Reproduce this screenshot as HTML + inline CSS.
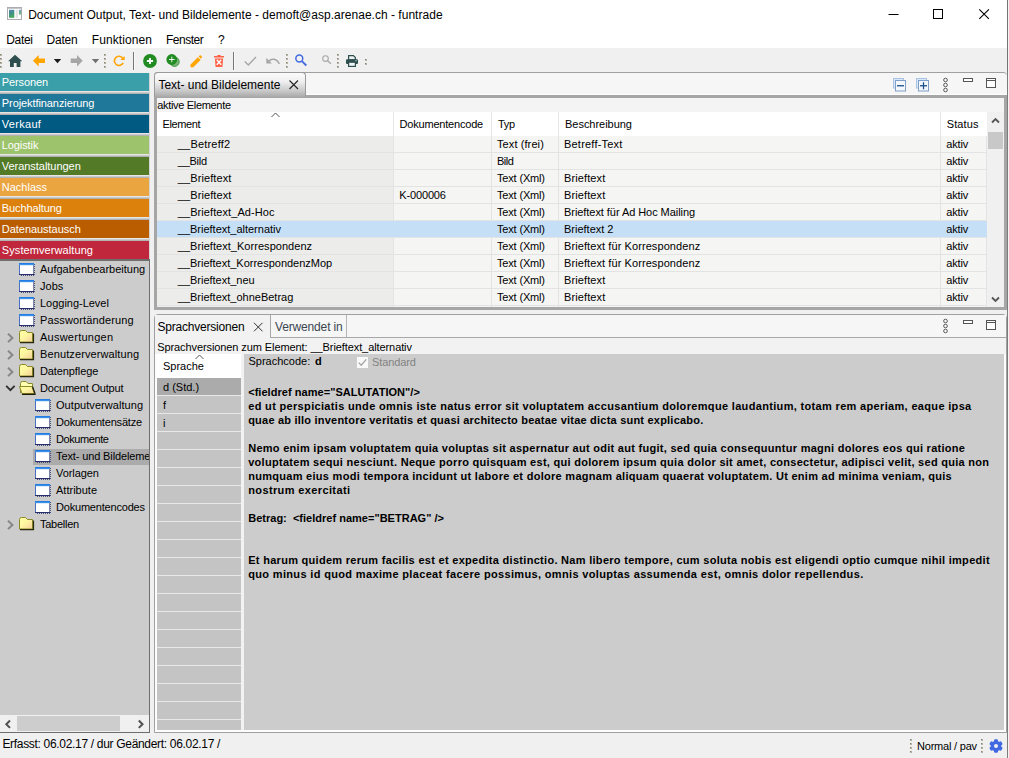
<!DOCTYPE html>
<html lang="de"><head><meta charset="utf-8"><title>Document Output, Text- und Bildelemente</title>
<style>
html,body{margin:0;padding:0;}
body{width:1009px;height:758px;overflow:hidden;background:#fff;position:relative;font-family:"Liberation Sans",sans-serif;}
#app{position:absolute;left:0;top:0;width:1009px;height:758px;overflow:hidden;background:#fff;}
#app div,#app span.t,#app svg{position:absolute;}
span.t{white-space:pre;display:block;}
</style></head><body><div id="app">

<div style="left:0px;top:48px;width:1007px;height:710px;background:#f0f0f0;"></div>
<div style="left:1007px;top:0px;width:1px;height:758px;background:#7c7c7c;"></div>
<div style="left:1007px;top:0px;width:1px;height:72px;background:#747474;"></div>
<div style="left:1008px;top:0px;width:1px;height:758px;background:#f4f4f4;"></div>
<svg style="left:7px;top:7px" width="15" height="13" viewBox="0 0 15 13"><defs><linearGradient id="ig" x1="0" y1="0" x2="0.300" y2="1"><stop offset="0" stop-color="#5a86b8"/><stop offset="0.5" stop-color="#3f8f8a"/><stop offset="1" stop-color="#48a85c"/></linearGradient></defs><rect x="0.5" y="0.5" width="14" height="12" fill="#fdfdfd" stroke="#a9acb0"/><rect x="0.5" y="1" width="14" height="1" fill="#c4c7ca"/><rect x="2" y="2.800" width="5.300" height="8" fill="url(#ig)"/><rect x="8.700" y="2.800" width="2.100" height="8" fill="#e2e2e2"/><rect x="11.900" y="2.800" width="2.200" height="4.800" fill="url(#ig)" opacity="0.750"/></svg>
<span class="t " style="left:28.2px;top:7.04px;font-size:12px;line-height:16px;color:#000;letter-spacing:0.021px;">Document Output, Text- und Bildelemente - demoft@asp.arenae.ch - funtrade</span>
<svg style="left:880px;top:0" width="127" height="30" viewBox="0 0 127 30"><path d="M8.5 14.5h10" stroke="#000" stroke-width="1" fill="none"/><rect x="53.5" y="9.5" width="9" height="9" stroke="#000" fill="none"/><path d="M99.300 9.300l9.600 9.600M108.900 9.300l-9.600 9.600" stroke="#000" stroke-width="1.100" fill="none"/></svg>
<span class="t " style="left:6.2px;top:31.84px;font-size:12px;line-height:16px;color:#000;letter-spacing:-0.304px;">Datei</span>
<span class="t " style="left:46.6px;top:31.84px;font-size:12px;line-height:16px;color:#000;letter-spacing:-0.233px;">Daten</span>
<span class="t " style="left:91.8px;top:31.84px;font-size:12px;line-height:16px;color:#000;letter-spacing:0.081px;">Funktionen</span>
<span class="t " style="left:166px;top:31.84px;font-size:12px;line-height:16px;color:#000;letter-spacing:-0.481px;">Fenster</span>
<span class="t " style="left:218px;top:31.84px;font-size:12px;line-height:16px;color:#000;letter-spacing:-1.188px;">?</span>
<div style="left:0px;top:54px;width:2px;height:2px;background:#b4b1a2;"></div>
<div style="left:0px;top:54px;width:1px;height:1px;background:#858270;"></div>
<div style="left:0px;top:58px;width:2px;height:2px;background:#b4b1a2;"></div>
<div style="left:0px;top:58px;width:1px;height:1px;background:#858270;"></div>
<div style="left:0px;top:62px;width:2px;height:2px;background:#b4b1a2;"></div>
<div style="left:0px;top:62px;width:1px;height:1px;background:#858270;"></div>
<div style="left:0px;top:66px;width:2px;height:2px;background:#b4b1a2;"></div>
<div style="left:0px;top:66px;width:1px;height:1px;background:#858270;"></div>
<div style="left:104px;top:54px;width:2px;height:2px;background:#b4b1a2;"></div>
<div style="left:104px;top:54px;width:1px;height:1px;background:#858270;"></div>
<div style="left:104px;top:58px;width:2px;height:2px;background:#b4b1a2;"></div>
<div style="left:104px;top:58px;width:1px;height:1px;background:#858270;"></div>
<div style="left:104px;top:62px;width:2px;height:2px;background:#b4b1a2;"></div>
<div style="left:104px;top:62px;width:1px;height:1px;background:#858270;"></div>
<div style="left:104px;top:66px;width:2px;height:2px;background:#b4b1a2;"></div>
<div style="left:104px;top:66px;width:1px;height:1px;background:#858270;"></div>
<div style="left:286px;top:54px;width:2px;height:2px;background:#b4b1a2;"></div>
<div style="left:286px;top:54px;width:1px;height:1px;background:#858270;"></div>
<div style="left:286px;top:58px;width:2px;height:2px;background:#b4b1a2;"></div>
<div style="left:286px;top:58px;width:1px;height:1px;background:#858270;"></div>
<div style="left:286px;top:62px;width:2px;height:2px;background:#b4b1a2;"></div>
<div style="left:286px;top:62px;width:1px;height:1px;background:#858270;"></div>
<div style="left:286px;top:66px;width:2px;height:2px;background:#b4b1a2;"></div>
<div style="left:286px;top:66px;width:1px;height:1px;background:#858270;"></div>
<div style="left:337px;top:54px;width:2px;height:2px;background:#b4b1a2;"></div>
<div style="left:337px;top:54px;width:1px;height:1px;background:#858270;"></div>
<div style="left:337px;top:58px;width:2px;height:2px;background:#b4b1a2;"></div>
<div style="left:337px;top:58px;width:1px;height:1px;background:#858270;"></div>
<div style="left:337px;top:62px;width:2px;height:2px;background:#b4b1a2;"></div>
<div style="left:337px;top:62px;width:1px;height:1px;background:#858270;"></div>
<div style="left:337px;top:66px;width:2px;height:2px;background:#b4b1a2;"></div>
<div style="left:337px;top:66px;width:1px;height:1px;background:#858270;"></div>
<div style="left:365px;top:59px;width:2px;height:2px;background:#b4b1a2;"></div>
<div style="left:365px;top:59px;width:1px;height:1px;background:#858270;"></div>
<div style="left:365px;top:63px;width:2px;height:2px;background:#b4b1a2;"></div>
<div style="left:365px;top:63px;width:1px;height:1px;background:#858270;"></div>
<div style="left:133px;top:52px;width:1px;height:18px;background:#777777;"></div>
<div style="left:233px;top:52px;width:1px;height:18px;background:#777777;"></div>
<div style="left:134px;top:52px;width:1px;height:18px;background:#f8f8f8;"></div>
<div style="left:234px;top:52px;width:1px;height:18px;background:#f8f8f8;"></div>
<svg style="left:8px;top:54px" width="14" height="14" viewBox="0 0 14 14"><path d="M7 0.7L0.100 7.300h1.900v5.700h3.800V9h2.800v4h3.800V7.300h1.900z" fill="#2f4f4f"/></svg>
<svg style="left:33px;top:55px" width="13" height="12" viewBox="0 0 13 12"><path d="M0 5.700L5.700 0.100V3.500H12V7.900H5.700V11.400z" fill="#ffa500"/></svg>
<svg style="left:53px;top:59px" width="9" height="5" viewBox="0 0 9 5"><path d="M0.800 0h7.400L4.500 4.200z" fill="#1a1a1a"/></svg>
<svg style="left:70px;top:55px" width="13" height="12" viewBox="0 0 13 12"><path d="M12.700 5.700L7 0.100V3.500H0.700V7.900H7V11.400z" fill="#a6a6a6"/></svg>
<svg style="left:91px;top:59px" width="9" height="5" viewBox="0 0 9 5"><path d="M0.800 0h7.400L4.500 4.200z" fill="#707070"/></svg>
<svg style="left:113px;top:54px" width="13" height="14" viewBox="0 0 13 14"><path d="M9.770 4.260A4.600 4.600 0 1 0 10.170 8.840" stroke="#ffa500" stroke-width="1.600" fill="none"/><path d="M11.700 1.900v4.100H7.300z" fill="#ffa500"/></svg>
<svg style="left:143px;top:54px" width="14" height="14" viewBox="0 0 14 14"><circle cx="7" cy="7" r="6.9" fill="#228b22"/><path d="M7 3.900v6.200M3.900 7h6.200" stroke="#fff" stroke-width="1.800"/></svg>
<svg style="left:166px;top:54px" width="15" height="14" viewBox="0 0 15 14"><circle cx="8.500" cy="7.700" r="4.700" fill="#7cb47c" stroke="#3f963f" stroke-width="1"/><circle cx="5.800" cy="5.500" r="5.400" fill="#228b22"/><path d="M5.800 2.700v5.600M3 5.500h5.600" stroke="#fff" stroke-width="0.900"/></svg>
<svg style="left:190px;top:54.500px" width="12.500" height="13" viewBox="0 0 13 14"><path d="M0.3 13.2v-3L8.2 2.3l3 3L3.3 13.2zM9.1 1.5l1-1c.4-.4.9-.4 1.3 0l1.1 1.2c.4.4.4.9 0 1.3l-1 1z" fill="#ffa500"/></svg>
<svg style="left:214px;top:55px" width="10" height="12" viewBox="0 0 10 12"><path d="M0 1h3l.6-1h2.8L7 1h3v1.6H0zM0.9 3.4h8.2l-.6 8c0 .4-.3.6-.7.6H2.2c-.4 0-.7-.2-.7-.6z" fill="#ff6347"/><path d="M2.800 4.700l4.400 5M7.200 4.700L2.800 9.700" stroke="#fff" stroke-width="1.400"/></svg>
<svg style="left:244px;top:56px" width="13" height="10" viewBox="0 0 13 10"><path d="M0.8 5.6l3.5 3.3L12 1" stroke="#a6a6a6" stroke-width="1.4" fill="none"/></svg>
<svg style="left:266px;top:57px" width="14" height="8" viewBox="0 0 14 8"><path d="M2.5 4.5C5.5 1.2 10.5 1.2 13.3 7" stroke="#a6a6a6" stroke-width="1.5" fill="none"/><path d="M0.3 0.8v5.6h5.6z" fill="#a6a6a6"/></svg>
<svg style="left:294.800px;top:54.300px" width="13" height="13" viewBox="0 0 13 13"><circle cx="4.300" cy="4.500" r="3.450" stroke="#4169e1" stroke-width="1.500" fill="none"/><path d="M6.900 7.100l4.400 4.400" stroke="#4169e1" stroke-width="1.800"/></svg>
<svg style="left:321.800px;top:55px" width="10" height="10" viewBox="0 0 10 10"><circle cx="3.500" cy="3.600" r="2.800" stroke="#a6a6a6" stroke-width="1.100" fill="none"/><path d="M5.600 5.700l3.300 3.100" stroke="#a6a6a6" stroke-width="1.300"/></svg>
<svg style="left:346px;top:55px" width="12" height="12" viewBox="0 0 12 12"><path d="M2.600 4.800V0.600H7.400L9.400 2.600V4.800z" fill="#eef2f2" stroke="#2f4f4f" stroke-width="1.200"/><rect x="0" y="4.200" width="12" height="4.800" rx="1.100" fill="#2f4f4f"/><rect x="2.600" y="7.200" width="6.800" height="4.200" fill="#f2f5f5" stroke="#2f4f4f" stroke-width="1.200"/><rect x="9.300" y="5.300" width="1.400" height="0.900" fill="#d5dede"/></svg>
<div style="left:0px;top:73px;width:150px;height:187px;background:#d4d4d4;"></div>
<div style="left:0px;top:73px;width:149px;height:18px;background:#3a9fa8;"></div>
<div style="left:0px;top:91px;width:149px;height:1px;background:#e6e6e6;"></div>
<div style="left:0px;top:92px;width:149px;height:1px;background:#cbcbcb;"></div>
<div style="left:0px;top:93px;width:149px;height:1px;background:#b2b2b2;"></div>
<span class="t " style="left:1.8px;top:74.69px;font-size:11px;line-height:15px;color:#fff;letter-spacing:-0.113px;">Personen</span>
<div style="left:0px;top:94px;width:149px;height:18px;background:#1f789a;"></div>
<div style="left:0px;top:112px;width:149px;height:1px;background:#e6e6e6;"></div>
<div style="left:0px;top:113px;width:149px;height:1px;background:#cbcbcb;"></div>
<div style="left:0px;top:114px;width:149px;height:1px;background:#b2b2b2;"></div>
<span class="t " style="left:1.8px;top:95.69px;font-size:11px;line-height:15px;color:#fff;letter-spacing:-0.082px;">Projektfinanzierung</span>
<div style="left:0px;top:115px;width:149px;height:18px;background:#005a82;"></div>
<div style="left:0px;top:133px;width:149px;height:1px;background:#e6e6e6;"></div>
<div style="left:0px;top:134px;width:149px;height:1px;background:#cbcbcb;"></div>
<div style="left:0px;top:135px;width:149px;height:1px;background:#b2b2b2;"></div>
<span class="t " style="left:1.8px;top:116.69px;font-size:11px;line-height:15px;color:#fff;letter-spacing:0.298px;">Verkauf</span>
<div style="left:0px;top:136px;width:149px;height:18px;background:#9dc46c;"></div>
<div style="left:0px;top:154px;width:149px;height:1px;background:#e6e6e6;"></div>
<div style="left:0px;top:155px;width:149px;height:1px;background:#cbcbcb;"></div>
<div style="left:0px;top:156px;width:149px;height:1px;background:#b2b2b2;"></div>
<span class="t " style="left:1.8px;top:137.69px;font-size:11px;line-height:15px;color:#fff;letter-spacing:-0.1px;">Logistik</span>
<div style="left:0px;top:157px;width:149px;height:18px;background:#537a27;"></div>
<div style="left:0px;top:175px;width:149px;height:1px;background:#e6e6e6;"></div>
<div style="left:0px;top:176px;width:149px;height:1px;background:#cbcbcb;"></div>
<div style="left:0px;top:177px;width:149px;height:1px;background:#b2b2b2;"></div>
<span class="t " style="left:1.8px;top:158.69px;font-size:11px;line-height:15px;color:#fff;letter-spacing:-0.037px;">Veranstaltungen</span>
<div style="left:0px;top:178px;width:149px;height:18px;background:#eba540;"></div>
<div style="left:0px;top:196px;width:149px;height:1px;background:#e6e6e6;"></div>
<div style="left:0px;top:197px;width:149px;height:1px;background:#cbcbcb;"></div>
<div style="left:0px;top:198px;width:149px;height:1px;background:#b2b2b2;"></div>
<span class="t " style="left:1.8px;top:179.69px;font-size:11px;line-height:15px;color:#fff;letter-spacing:-0.007px;">Nachlass</span>
<div style="left:0px;top:199px;width:149px;height:18px;background:#dc820c;"></div>
<div style="left:0px;top:217px;width:149px;height:1px;background:#e6e6e6;"></div>
<div style="left:0px;top:218px;width:149px;height:1px;background:#cbcbcb;"></div>
<div style="left:0px;top:219px;width:149px;height:1px;background:#b2b2b2;"></div>
<span class="t " style="left:1.8px;top:200.69px;font-size:11px;line-height:15px;color:#fff;letter-spacing:-0.107px;">Buchhaltung</span>
<div style="left:0px;top:220px;width:149px;height:18px;background:#b95d00;"></div>
<div style="left:0px;top:238px;width:149px;height:1px;background:#e6e6e6;"></div>
<div style="left:0px;top:239px;width:149px;height:1px;background:#cbcbcb;"></div>
<div style="left:0px;top:240px;width:149px;height:1px;background:#b2b2b2;"></div>
<span class="t " style="left:1.8px;top:221.69px;font-size:11px;line-height:15px;color:#fff;letter-spacing:-0.038px;">Datenaustausch</span>
<div style="left:0px;top:241px;width:149px;height:18px;background:#c0263c;"></div>
<span class="t " style="left:1.8px;top:242.69px;font-size:11px;line-height:15px;color:#fff;letter-spacing:0.088px;">Systemverwaltung</span>
<div style="left:0px;top:259px;width:150px;height:474px;background:#6e6e6e;"></div>
<div style="left:0px;top:261px;width:149px;height:471px;background:#cccccc;"></div>
<div style="left:0px;top:715px;width:149px;height:17px;background:#f0f0f0;"></div>
<div style="left:17px;top:716px;width:103px;height:15px;background:#cdcdcd;"></div>
<svg style="left:0;top:715.500px" width="149" height="16" viewBox="0 0 149 16"><path d="M10 4.500L6.300 8.200l3.700 3.700M138.800 4.500l3.700 3.700-3.700 3.700" stroke="#505050" stroke-width="2" fill="none"/></svg>
<svg style="left:0;top:0" width="0" height="0"><defs><linearGradient id="fg" x1="0" y1="0" x2="1" y2="1"><stop offset="0" stop-color="#ffffa6"/><stop offset="0.45" stop-color="#fdf7a0"/><stop offset="1" stop-color="#f6cf9e"/></linearGradient><linearGradient id="wg" x1="0" y1="0" x2="0" y2="1"><stop offset="0" stop-color="#1874dc"/><stop offset="1" stop-color="#4a9cf0"/></linearGradient></defs></svg>
<svg style="left:19px;top:263px" width="16" height="13" viewBox="0 0 16 13"><rect x="0.5" y="0.5" width="14" height="11" fill="#fff" stroke="#4a6ec0"/><path d="M0 11.500H15" stroke="#262e6e"/><rect x="0" y="0" width="15" height="2.200" fill="url(#wg)"/><path d="M15.500 1v11.500H1" stroke="#4a5078" fill="none" stroke-dasharray="1 1"/><path d="M14.500 2v9" stroke="#7a86a8" fill="none"/></svg>
<span class="t " style="left:40px;top:261.69px;font-size:11px;line-height:15px;color:#000;letter-spacing:-0.001px;">Aufgabenbearbeitung</span>
<svg style="left:19px;top:280px" width="16" height="13" viewBox="0 0 16 13"><rect x="0.5" y="0.5" width="14" height="11" fill="#fff" stroke="#4a6ec0"/><path d="M0 11.500H15" stroke="#262e6e"/><rect x="0" y="0" width="15" height="2.200" fill="url(#wg)"/><path d="M15.500 1v11.500H1" stroke="#4a5078" fill="none" stroke-dasharray="1 1"/><path d="M14.500 2v9" stroke="#7a86a8" fill="none"/></svg>
<span class="t " style="left:40px;top:278.69px;font-size:11px;line-height:15px;color:#000;letter-spacing:0.017px;">Jobs</span>
<svg style="left:19px;top:297px" width="16" height="13" viewBox="0 0 16 13"><rect x="0.5" y="0.5" width="14" height="11" fill="#fff" stroke="#4a6ec0"/><path d="M0 11.500H15" stroke="#262e6e"/><rect x="0" y="0" width="15" height="2.200" fill="url(#wg)"/><path d="M15.500 1v11.500H1" stroke="#4a5078" fill="none" stroke-dasharray="1 1"/><path d="M14.500 2v9" stroke="#7a86a8" fill="none"/></svg>
<span class="t " style="left:40px;top:295.69px;font-size:11px;line-height:15px;color:#000;letter-spacing:-0.019px;">Logging-Level</span>
<svg style="left:19px;top:314px" width="16" height="13" viewBox="0 0 16 13"><rect x="0.5" y="0.5" width="14" height="11" fill="#fff" stroke="#4a6ec0"/><path d="M0 11.500H15" stroke="#262e6e"/><rect x="0" y="0" width="15" height="2.200" fill="url(#wg)"/><path d="M15.500 1v11.500H1" stroke="#4a5078" fill="none" stroke-dasharray="1 1"/><path d="M14.500 2v9" stroke="#7a86a8" fill="none"/></svg>
<span class="t " style="left:40px;top:312.69px;font-size:11px;line-height:15px;color:#000;letter-spacing:0.124px;">Passwortänderung</span>
<svg style="left:7.1px;top:332.5px" width="7" height="10" viewBox="0 0 7 10"><path d="M1 0.700L5.400 4.900L1 9.100" stroke="#868686" stroke-width="2" fill="none"/></svg>
<svg style="left:19px;top:330px" width="16" height="14" viewBox="0 0 16 14"><path d="M0.500 12V2.500Q0.500 0.500 2.500 0.500H6.500L8.500 2.500H13.500V12z" fill="url(#fg)" stroke="#8a8a28"/><path d="M14.500 3.500V12.700H1" stroke="#2a2a10" fill="none" stroke-width="1.200"/></svg>
<span class="t " style="left:40px;top:329.69px;font-size:11px;line-height:15px;color:#000;letter-spacing:0.243px;">Auswertungen</span>
<svg style="left:7.1px;top:349.5px" width="7" height="10" viewBox="0 0 7 10"><path d="M1 0.700L5.400 4.900L1 9.100" stroke="#868686" stroke-width="2" fill="none"/></svg>
<svg style="left:19px;top:347px" width="16" height="14" viewBox="0 0 16 14"><path d="M0.500 12V2.500Q0.500 0.500 2.500 0.500H6.500L8.500 2.500H13.500V12z" fill="url(#fg)" stroke="#8a8a28"/><path d="M14.500 3.500V12.700H1" stroke="#2a2a10" fill="none" stroke-width="1.200"/></svg>
<span class="t " style="left:40px;top:346.69px;font-size:11px;line-height:15px;color:#000;letter-spacing:0.11px;">Benutzerverwaltung</span>
<svg style="left:7.1px;top:366.5px" width="7" height="10" viewBox="0 0 7 10"><path d="M1 0.700L5.400 4.900L1 9.100" stroke="#868686" stroke-width="2" fill="none"/></svg>
<svg style="left:19px;top:364px" width="16" height="14" viewBox="0 0 16 14"><path d="M0.500 12V2.500Q0.500 0.500 2.500 0.500H6.500L8.500 2.500H13.500V12z" fill="url(#fg)" stroke="#8a8a28"/><path d="M14.500 3.500V12.700H1" stroke="#2a2a10" fill="none" stroke-width="1.200"/></svg>
<span class="t " style="left:40px;top:363.69px;font-size:11px;line-height:15px;color:#000;letter-spacing:-0.103px;">Datenpflege</span>
<svg style="left:5px;top:385px" width="11" height="7" viewBox="0 0 11 7"><path d="M1.200 0.800l4.200 4.300L9.600 0.800" stroke="#303030" stroke-width="1.900" fill="none"/></svg>
<svg style="left:19px;top:381px" width="17" height="14" viewBox="0 0 17 14"><path d="M1.500 12V2.500Q1.500 0.500 3.500 0.500H7L9 2.500H13.500V5.500" fill="#ffffb4" stroke="#8a8a28"/><path d="M0.500 5.500H12.800L15.300 12.500H3z" fill="url(#fg)" stroke="#8a8a28"/><path d="M13.500 5.500L16 12.500V13.300H3" stroke="#1a1a08" fill="none" stroke-width="1.200"/></svg>
<span class="t " style="left:40px;top:380.69px;font-size:11px;line-height:15px;color:#000;letter-spacing:-0.194px;">Document Output</span>
<svg style="left:35px;top:399px" width="16" height="13" viewBox="0 0 16 13"><rect x="0.5" y="0.5" width="14" height="11" fill="#fff" stroke="#4a6ec0"/><path d="M0 11.500H15" stroke="#262e6e"/><rect x="0" y="0" width="15" height="2.200" fill="url(#wg)"/><path d="M15.500 1v11.500H1" stroke="#4a5078" fill="none" stroke-dasharray="1 1"/><path d="M14.500 2v9" stroke="#7a86a8" fill="none"/></svg>
<span class="t " style="left:56px;top:397.69px;font-size:11px;line-height:15px;color:#000;letter-spacing:0.052px;">Outputverwaltung</span>
<svg style="left:35px;top:416px" width="16" height="13" viewBox="0 0 16 13"><rect x="0.5" y="0.5" width="14" height="11" fill="#fff" stroke="#4a6ec0"/><path d="M0 11.500H15" stroke="#262e6e"/><rect x="0" y="0" width="15" height="2.200" fill="url(#wg)"/><path d="M15.500 1v11.500H1" stroke="#4a5078" fill="none" stroke-dasharray="1 1"/><path d="M14.500 2v9" stroke="#7a86a8" fill="none"/></svg>
<span class="t " style="left:56px;top:414.69px;font-size:11px;line-height:15px;color:#000;letter-spacing:-0.177px;">Dokumentensätze</span>
<svg style="left:35px;top:433px" width="16" height="13" viewBox="0 0 16 13"><rect x="0.5" y="0.5" width="14" height="11" fill="#fff" stroke="#4a6ec0"/><path d="M0 11.500H15" stroke="#262e6e"/><rect x="0" y="0" width="15" height="2.200" fill="url(#wg)"/><path d="M15.500 1v11.500H1" stroke="#4a5078" fill="none" stroke-dasharray="1 1"/><path d="M14.500 2v9" stroke="#7a86a8" fill="none"/></svg>
<span class="t " style="left:56px;top:431.69px;font-size:11px;line-height:15px;color:#000;letter-spacing:-0.408px;">Dokumente</span>
<div style="left:33px;top:449px;width:116px;height:16px;background:#ababab;"></div>
<svg style="left:35px;top:450px" width="16" height="13" viewBox="0 0 16 13"><rect x="0.5" y="0.5" width="14" height="11" fill="#fff" stroke="#4a6ec0"/><path d="M0 11.500H15" stroke="#262e6e"/><rect x="0" y="0" width="15" height="2.200" fill="url(#wg)"/><path d="M15.500 1v11.500H1" stroke="#4a5078" fill="none" stroke-dasharray="1 1"/><path d="M14.500 2v9" stroke="#7a86a8" fill="none"/></svg>
<div style="left:56px;top:448px;width:93px;height:17px;overflow:hidden;background:none"><span class="t" style="left:0;top:1.4px;font-size:11px;line-height:15px;color:#000;letter-spacing:-0.12px">Text- und Bildelemente</span></div>
<svg style="left:35px;top:467px" width="16" height="13" viewBox="0 0 16 13"><rect x="0.5" y="0.5" width="14" height="11" fill="#fff" stroke="#4a6ec0"/><path d="M0 11.500H15" stroke="#262e6e"/><rect x="0" y="0" width="15" height="2.200" fill="url(#wg)"/><path d="M15.500 1v11.500H1" stroke="#4a5078" fill="none" stroke-dasharray="1 1"/><path d="M14.500 2v9" stroke="#7a86a8" fill="none"/></svg>
<span class="t " style="left:56px;top:465.69px;font-size:11px;line-height:15px;color:#000;letter-spacing:-0.077px;">Vorlagen</span>
<svg style="left:35px;top:484px" width="16" height="13" viewBox="0 0 16 13"><rect x="0.5" y="0.5" width="14" height="11" fill="#fff" stroke="#4a6ec0"/><path d="M0 11.500H15" stroke="#262e6e"/><rect x="0" y="0" width="15" height="2.200" fill="url(#wg)"/><path d="M15.500 1v11.500H1" stroke="#4a5078" fill="none" stroke-dasharray="1 1"/><path d="M14.500 2v9" stroke="#7a86a8" fill="none"/></svg>
<span class="t " style="left:56px;top:482.69px;font-size:11px;line-height:15px;color:#000;letter-spacing:0.004px;">Attribute</span>
<svg style="left:35px;top:501px" width="16" height="13" viewBox="0 0 16 13"><rect x="0.5" y="0.5" width="14" height="11" fill="#fff" stroke="#4a6ec0"/><path d="M0 11.500H15" stroke="#262e6e"/><rect x="0" y="0" width="15" height="2.200" fill="url(#wg)"/><path d="M15.500 1v11.500H1" stroke="#4a5078" fill="none" stroke-dasharray="1 1"/><path d="M14.500 2v9" stroke="#7a86a8" fill="none"/></svg>
<span class="t " style="left:56px;top:499.69px;font-size:11px;line-height:15px;color:#000;letter-spacing:-0.195px;">Dokumentencodes</span>
<svg style="left:7.1px;top:519.5px" width="7" height="10" viewBox="0 0 7 10"><path d="M1 0.700L5.400 4.900L1 9.100" stroke="#868686" stroke-width="2" fill="none"/></svg>
<svg style="left:19px;top:517px" width="16" height="14" viewBox="0 0 16 14"><path d="M0.500 12V2.500Q0.500 0.500 2.500 0.500H6.500L8.500 2.500H13.500V12z" fill="url(#fg)" stroke="#8a8a28"/><path d="M14.500 3.500V12.700H1" stroke="#2a2a10" fill="none" stroke-width="1.200"/></svg>
<span class="t " style="left:40px;top:516.69px;font-size:11px;line-height:15px;color:#000;letter-spacing:-0.269px;">Tabellen</span>
<div style="left:154px;top:72px;width:853px;height:25px;background:#f6f6f6;border-top:1px solid #a0a0a0;border-radius:4px 4px 0 0;box-sizing:border-box"></div>
<div style="left:306px;top:94px;width:701px;height:1px;background:#fdfdfd;"></div>
<div style="left:154px;top:95px;width:853px;height:215px;background:#a6a6a6;"></div>
<div style="left:154px;top:72px;width:152px;height:25px;box-sizing:border-box;border:1px solid #9a9a9a;border-bottom:none;border-radius:4px 4px 0 0;background:linear-gradient(#fbfbfb 0%,#f0f0f0 35%,#c8c8c8 75%,#a8a8a8 100%)"></div>
<span class="t " style="left:158.4px;top:76.84px;font-size:12px;line-height:16px;color:#000;letter-spacing:0.001px;">Text- und Bildelemente</span>
<svg style="left:289px;top:80px" width="10" height="10" viewBox="0 0 10 10"><path d="M0.5 0.5l8.500 8.500M9 0.5L0.5 9" stroke="#222" stroke-width="1.1" fill="none"/></svg>
<svg style="left:893px;top:78px" width="13" height="14" viewBox="0 0 13 14"><rect x="0.5" y="0.5" width="10" height="9.500" fill="#dbe8f8" stroke="#a9c3e4"/><rect x="2.500" y="2.500" width="10" height="10.500" fill="#f4f8fd" stroke="#7f9fc8"/><path d="M4 7.750h7" stroke="#1b4f8a" stroke-width="1.300"/></svg>
<svg style="left:916px;top:78px" width="13" height="14" viewBox="0 0 13 14"><rect x="0.5" y="0.5" width="10" height="9.500" fill="#dbe8f8" stroke="#a9c3e4"/><rect x="2.500" y="2.500" width="10" height="10.500" fill="#f4f8fd" stroke="#7f9fc8"/><path d="M4 7.750h7" stroke="#1b4f8a" stroke-width="1.300"/><path d="M7.500 4.250v7" stroke="#1b4f8a" stroke-width="1.300"/></svg>
<svg style="left:942px;top:77px" width="7" height="16" viewBox="0 0 7 16"><circle cx="3.500" cy="3" r="1.800" fill="#fff" stroke="#555"/><circle cx="3.500" cy="8" r="1.800" fill="#fff" stroke="#555"/><circle cx="3.500" cy="13" r="1.800" fill="#fff" stroke="#555"/></svg>
<svg style="left:963px;top:78px" width="11" height="5" viewBox="0 0 11 5"><rect x="0.5" y="0.5" width="9" height="3" fill="#fff" stroke="#555"/></svg>
<svg style="left:986px;top:78px" width="11" height="11" viewBox="0 0 11 11"><rect x="0.5" y="0.5" width="9" height="9" fill="#fff" stroke="#555"/><path d="M0.5 2.500h9" stroke="#555"/></svg>
<div style="left:157px;top:98px;width:847px;height:14px;background:#f4f4f4;"></div>
<span class="t " style="left:157.3px;top:97.69px;font-size:11px;line-height:15px;color:#000;letter-spacing:-0.326px;">aktive Elemente</span>
<div style="left:157px;top:112px;width:829.5px;height:24px;background:#ffffff;"></div>
<div style="left:987px;top:112px;width:17px;height:195px;background:#f0f0f0;"></div>
<div style="left:157px;top:136px;width:830px;height:171px;background:#e3e3e3;"></div>
<div style="left:157px;top:136px;width:236px;height:16px;background:#ececea;"></div>
<div style="left:394px;top:136px;width:97px;height:16px;background:#f5f5f3;"></div>
<div style="left:492px;top:136px;width:66px;height:16px;background:#f5f5f3;"></div>
<div style="left:559px;top:136px;width:381px;height:16px;background:#f5f5f3;"></div>
<div style="left:941px;top:136px;width:45px;height:16px;background:#f5f5f3;"></div>
<span class="t " style="left:177.8px;top:136.69px;font-size:11px;line-height:15px;color:#000;letter-spacing:0.193px;">__Betreff2</span>
<span class="t " style="left:497px;top:136.69px;font-size:11px;line-height:15px;color:#000;letter-spacing:0.096px;">Text (frei)</span>
<span class="t " style="left:564px;top:136.69px;font-size:11px;line-height:15px;color:#000;letter-spacing:0.205px;">Betreff-Text</span>
<span class="t " style="left:946.2px;top:136.69px;font-size:11px;line-height:15px;color:#000;letter-spacing:-0.131px;">aktiv</span>
<div style="left:157px;top:153px;width:236px;height:16px;background:#ececea;"></div>
<div style="left:394px;top:153px;width:97px;height:16px;background:#f5f5f3;"></div>
<div style="left:492px;top:153px;width:66px;height:16px;background:#f5f5f3;"></div>
<div style="left:559px;top:153px;width:381px;height:16px;background:#f5f5f3;"></div>
<div style="left:941px;top:153px;width:45px;height:16px;background:#f5f5f3;"></div>
<span class="t " style="left:177.8px;top:153.69px;font-size:11px;line-height:15px;color:#000;letter-spacing:-0.276px;">__Bild</span>
<span class="t " style="left:497px;top:153.69px;font-size:11px;line-height:15px;color:#000;letter-spacing:-0.481px;">Bild</span>
<span class="t " style="left:946.2px;top:153.69px;font-size:11px;line-height:15px;color:#000;letter-spacing:-0.131px;">aktiv</span>
<div style="left:157px;top:170px;width:236px;height:16px;background:#ececea;"></div>
<div style="left:394px;top:170px;width:97px;height:16px;background:#f5f5f3;"></div>
<div style="left:492px;top:170px;width:66px;height:16px;background:#f5f5f3;"></div>
<div style="left:559px;top:170px;width:381px;height:16px;background:#f5f5f3;"></div>
<div style="left:941px;top:170px;width:45px;height:16px;background:#f5f5f3;"></div>
<span class="t " style="left:177.8px;top:170.69px;font-size:11px;line-height:15px;color:#000;letter-spacing:0.101px;">__Brieftext</span>
<span class="t " style="left:497px;top:170.69px;font-size:11px;line-height:15px;color:#000;letter-spacing:-0.167px;">Text (Xml)</span>
<span class="t " style="left:564px;top:170.69px;font-size:11px;line-height:15px;color:#000;letter-spacing:0.105px;">Brieftext</span>
<span class="t " style="left:946.2px;top:170.69px;font-size:11px;line-height:15px;color:#000;letter-spacing:-0.131px;">aktiv</span>
<div style="left:157px;top:187px;width:236px;height:16px;background:#ececea;"></div>
<div style="left:394px;top:187px;width:97px;height:16px;background:#f5f5f3;"></div>
<div style="left:492px;top:187px;width:66px;height:16px;background:#f5f5f3;"></div>
<div style="left:559px;top:187px;width:381px;height:16px;background:#f5f5f3;"></div>
<div style="left:941px;top:187px;width:45px;height:16px;background:#f5f5f3;"></div>
<span class="t " style="left:177.8px;top:187.69px;font-size:11px;line-height:15px;color:#000;letter-spacing:0.101px;">__Brieftext</span>
<span class="t " style="left:399.2px;top:187.69px;font-size:11px;line-height:15px;color:#000;letter-spacing:-0.131px;">K-000006</span>
<span class="t " style="left:497px;top:187.69px;font-size:11px;line-height:15px;color:#000;letter-spacing:-0.167px;">Text (Xml)</span>
<span class="t " style="left:564px;top:187.69px;font-size:11px;line-height:15px;color:#000;letter-spacing:0.105px;">Brieftext</span>
<span class="t " style="left:946.2px;top:187.69px;font-size:11px;line-height:15px;color:#000;letter-spacing:-0.131px;">aktiv</span>
<div style="left:157px;top:204px;width:236px;height:16px;background:#ececea;"></div>
<div style="left:394px;top:204px;width:97px;height:16px;background:#f5f5f3;"></div>
<div style="left:492px;top:204px;width:66px;height:16px;background:#f5f5f3;"></div>
<div style="left:559px;top:204px;width:381px;height:16px;background:#f5f5f3;"></div>
<div style="left:941px;top:204px;width:45px;height:16px;background:#f5f5f3;"></div>
<span class="t " style="left:177.8px;top:204.69px;font-size:11px;line-height:15px;color:#000;letter-spacing:0.077px;">__Brieftext_Ad-Hoc</span>
<span class="t " style="left:497px;top:204.69px;font-size:11px;line-height:15px;color:#000;letter-spacing:-0.167px;">Text (Xml)</span>
<span class="t " style="left:564px;top:204.69px;font-size:11px;line-height:15px;color:#000;letter-spacing:-0.058px;">Brieftext für Ad Hoc Mailing</span>
<span class="t " style="left:946.2px;top:204.69px;font-size:11px;line-height:15px;color:#000;letter-spacing:-0.131px;">aktiv</span>
<div style="left:157px;top:221px;width:237px;height:16px;background:#c5dff6;"></div>
<div style="left:394px;top:221px;width:98px;height:16px;background:#c5dff6;"></div>
<div style="left:492px;top:221px;width:67px;height:16px;background:#c5dff6;"></div>
<div style="left:559px;top:221px;width:382px;height:16px;background:#c5dff6;"></div>
<div style="left:941px;top:221px;width:46px;height:16px;background:#c5dff6;"></div>
<span class="t " style="left:177.8px;top:221.69px;font-size:11px;line-height:15px;color:#000;letter-spacing:-0.007px;">__Brieftext_alternativ</span>
<span class="t " style="left:497px;top:221.69px;font-size:11px;line-height:15px;color:#000;letter-spacing:-0.167px;">Text (Xml)</span>
<span class="t " style="left:564px;top:221.69px;font-size:11px;line-height:15px;color:#000;letter-spacing:-0.003px;">Brieftext 2</span>
<span class="t " style="left:946.2px;top:221.69px;font-size:11px;line-height:15px;color:#000;letter-spacing:-0.131px;">aktiv</span>
<div style="left:157px;top:238px;width:236px;height:16px;background:#ececea;"></div>
<div style="left:394px;top:238px;width:97px;height:16px;background:#f5f5f3;"></div>
<div style="left:492px;top:238px;width:66px;height:16px;background:#f5f5f3;"></div>
<div style="left:559px;top:238px;width:381px;height:16px;background:#f5f5f3;"></div>
<div style="left:941px;top:238px;width:45px;height:16px;background:#f5f5f3;"></div>
<span class="t " style="left:177.8px;top:238.69px;font-size:11px;line-height:15px;color:#000;letter-spacing:0.041px;">__Brieftext_Korrespondenz</span>
<span class="t " style="left:497px;top:238.69px;font-size:11px;line-height:15px;color:#000;letter-spacing:-0.167px;">Text (Xml)</span>
<span class="t " style="left:564px;top:238.69px;font-size:11px;line-height:15px;color:#000;letter-spacing:0.088px;">Brieftext für Korrespondenz</span>
<span class="t " style="left:946.2px;top:238.69px;font-size:11px;line-height:15px;color:#000;letter-spacing:-0.131px;">aktiv</span>
<div style="left:157px;top:255px;width:236px;height:16px;background:#ececea;"></div>
<div style="left:394px;top:255px;width:97px;height:16px;background:#f5f5f3;"></div>
<div style="left:492px;top:255px;width:66px;height:16px;background:#f5f5f3;"></div>
<div style="left:559px;top:255px;width:381px;height:16px;background:#f5f5f3;"></div>
<div style="left:941px;top:255px;width:45px;height:16px;background:#f5f5f3;"></div>
<span class="t " style="left:177.8px;top:255.69px;font-size:11px;line-height:15px;color:#000;letter-spacing:-0.012px;">__Brieftext_KorrespondenzMop</span>
<span class="t " style="left:497px;top:255.69px;font-size:11px;line-height:15px;color:#000;letter-spacing:-0.167px;">Text (Xml)</span>
<span class="t " style="left:564px;top:255.69px;font-size:11px;line-height:15px;color:#000;letter-spacing:0.088px;">Brieftext für Korrespondenz</span>
<span class="t " style="left:946.2px;top:255.69px;font-size:11px;line-height:15px;color:#000;letter-spacing:-0.131px;">aktiv</span>
<div style="left:157px;top:272px;width:236px;height:16px;background:#ececea;"></div>
<div style="left:394px;top:272px;width:97px;height:16px;background:#f5f5f3;"></div>
<div style="left:492px;top:272px;width:66px;height:16px;background:#f5f5f3;"></div>
<div style="left:559px;top:272px;width:381px;height:16px;background:#f5f5f3;"></div>
<div style="left:941px;top:272px;width:45px;height:16px;background:#f5f5f3;"></div>
<span class="t " style="left:177.8px;top:272.69px;font-size:11px;line-height:15px;color:#000;letter-spacing:-0.012px;">__Brieftext_neu</span>
<span class="t " style="left:497px;top:272.69px;font-size:11px;line-height:15px;color:#000;letter-spacing:-0.167px;">Text (Xml)</span>
<span class="t " style="left:564px;top:272.69px;font-size:11px;line-height:15px;color:#000;letter-spacing:0.105px;">Brieftext</span>
<span class="t " style="left:946.2px;top:272.69px;font-size:11px;line-height:15px;color:#000;letter-spacing:-0.131px;">aktiv</span>
<div style="left:157px;top:289px;width:236px;height:16px;background:#ececea;"></div>
<div style="left:394px;top:289px;width:97px;height:16px;background:#f5f5f3;"></div>
<div style="left:492px;top:289px;width:66px;height:16px;background:#f5f5f3;"></div>
<div style="left:559px;top:289px;width:381px;height:16px;background:#f5f5f3;"></div>
<div style="left:941px;top:289px;width:45px;height:16px;background:#f5f5f3;"></div>
<span class="t " style="left:177.8px;top:289.69px;font-size:11px;line-height:15px;color:#000;letter-spacing:-0.004px;">__Brieftext_ohneBetrag</span>
<span class="t " style="left:497px;top:289.69px;font-size:11px;line-height:15px;color:#000;letter-spacing:-0.167px;">Text (Xml)</span>
<span class="t " style="left:564px;top:289.69px;font-size:11px;line-height:15px;color:#000;letter-spacing:0.105px;">Brieftext</span>
<span class="t " style="left:946.2px;top:289.69px;font-size:11px;line-height:15px;color:#000;letter-spacing:-0.131px;">aktiv</span>
<div style="left:157px;top:306px;width:236px;height:1px;background:#ececea;"></div>
<div style="left:394px;top:306px;width:97px;height:1px;background:#f5f5f3;"></div>
<div style="left:492px;top:306px;width:66px;height:1px;background:#f5f5f3;"></div>
<div style="left:559px;top:306px;width:381px;height:1px;background:#f5f5f3;"></div>
<div style="left:941px;top:306px;width:45px;height:1px;background:#f5f5f3;"></div>
<div style="left:393px;top:112px;width:1px;height:24px;background:#e6e6e6;"></div>
<div style="left:491px;top:112px;width:1px;height:24px;background:#e6e6e6;"></div>
<div style="left:558px;top:112px;width:1px;height:24px;background:#e6e6e6;"></div>
<div style="left:940px;top:112px;width:1px;height:24px;background:#e6e6e6;"></div>
<span class="t " style="left:162.6px;top:116.69px;font-size:11px;line-height:15px;color:#000;letter-spacing:-0.41px;">Element</span>
<span class="t " style="left:399.6px;top:116.69px;font-size:11px;line-height:15px;color:#000;letter-spacing:-0.203px;">Dokumentencode</span>
<span class="t " style="left:498px;top:116.69px;font-size:11px;line-height:15px;color:#000;letter-spacing:-0.367px;">Typ</span>
<span class="t " style="left:565px;top:116.69px;font-size:11px;line-height:15px;color:#000;letter-spacing:-0.026px;">Beschreibung</span>
<span class="t " style="left:946.8px;top:116.69px;font-size:11px;line-height:15px;color:#000;letter-spacing:0.083px;">Status</span>
<svg style="left:271px;top:112px" width="9" height="6" viewBox="0 0 9 6"><path d="M0.5 5L4.500 1l4 4" stroke="#555" stroke-width="1" fill="none"/></svg>
<div style="left:988px;top:132px;width:15px;height:17px;background:#c8c8c8;"></div>
<svg style="left:991px;top:117px" width="9" height="7" viewBox="0 0 9 7"><path d="M1 5.500L4.500 2l3.500 3.500" stroke="#555" stroke-width="1.800" fill="none"/></svg>
<svg style="left:991px;top:296px" width="9" height="7" viewBox="0 0 9 7"><path d="M1 1.500L4.500 5l3.500-3.500" stroke="#555" stroke-width="1.800" fill="none"/></svg>
<div style="left:154px;top:314px;width:853px;height:419px;box-sizing:border-box;border:1px solid #a0a0a0;border-radius:4px 4px 0 0;background:#fdfdfd"></div>
<div style="left:155px;top:315px;width:851px;height:39px;background:#f2f2f2;"></div>
<div style="left:270px;top:315px;width:736px;height:22px;background:#f6f6f6;"></div>
<div style="left:270px;top:337px;width:736px;height:1px;background:#a8a8a8;"></div>
<div style="left:270px;top:315px;width:1px;height:23px;background:#a8a8a8;"></div>
<div style="left:346px;top:315px;width:1px;height:22px;background:#b4b4b4;"></div>
<span class="t " style="left:157.5px;top:318.84px;font-size:12px;line-height:16px;color:#000;letter-spacing:-0.212px;">Sprachversionen</span>
<svg style="left:253px;top:322px" width="11" height="10" viewBox="0 0 11 10"><path d="M1 0.800l8.500 8.500M9.500 0.800L1 9.300" stroke="#333" stroke-width="1" fill="none"/></svg>
<span class="t " style="left:275px;top:318.84px;font-size:12px;line-height:16px;color:#3b4650;letter-spacing:-0.154px;">Verwendet in</span>
<svg style="left:942px;top:318.3px" width="7" height="16" viewBox="0 0 7 16"><circle cx="3.500" cy="3" r="1.800" fill="#fff" stroke="#555"/><circle cx="3.500" cy="8" r="1.800" fill="#fff" stroke="#555"/><circle cx="3.500" cy="13" r="1.800" fill="#fff" stroke="#555"/></svg>
<svg style="left:963px;top:320px" width="11" height="5" viewBox="0 0 11 5"><rect x="0.5" y="0.5" width="9" height="3" fill="#fff" stroke="#555"/></svg>
<svg style="left:986px;top:320px" width="11" height="11" viewBox="0 0 11 11"><rect x="0.5" y="0.5" width="9" height="9" fill="#fff" stroke="#555"/><path d="M0.5 2.500h9" stroke="#555"/></svg>
<span class="t " style="left:157.2px;top:339.69px;font-size:11px;line-height:15px;color:#000;letter-spacing:-0.089px;">Sprachversionen zum Element: __Brieftext_alternativ</span>
<div style="left:157px;top:354px;width:84px;height:24px;background:#ffffff;"></div>
<svg style="left:195px;top:354px" width="9" height="6" viewBox="0 0 9 6"><path d="M0.5 5L4.500 1l4 4" stroke="#555" stroke-width="1" fill="none"/></svg>
<span class="t " style="left:163px;top:358.69px;font-size:11px;line-height:15px;color:#000;">Sprache</span>
<div style="left:157px;top:378px;width:84px;height:352px;background:#e8e8e8;"></div>
<div style="left:157px;top:378px;width:84px;height:17px;background:#ababab;"></div>
<div style="left:157px;top:396px;width:84px;height:17px;background:#c4c4c4;"></div>
<div style="left:157px;top:414px;width:84px;height:17px;background:#c4c4c4;"></div>
<div style="left:157px;top:432px;width:84px;height:17px;background:#c4c4c4;"></div>
<div style="left:157px;top:450px;width:84px;height:17px;background:#c4c4c4;"></div>
<div style="left:157px;top:468px;width:84px;height:17px;background:#c4c4c4;"></div>
<div style="left:157px;top:486px;width:84px;height:17px;background:#c4c4c4;"></div>
<div style="left:157px;top:504px;width:84px;height:17px;background:#c4c4c4;"></div>
<div style="left:157px;top:522px;width:84px;height:17px;background:#c4c4c4;"></div>
<div style="left:157px;top:540px;width:84px;height:17px;background:#c4c4c4;"></div>
<div style="left:157px;top:558px;width:84px;height:17px;background:#c4c4c4;"></div>
<div style="left:157px;top:576px;width:84px;height:17px;background:#c4c4c4;"></div>
<div style="left:157px;top:594px;width:84px;height:17px;background:#c4c4c4;"></div>
<div style="left:157px;top:612px;width:84px;height:17px;background:#c4c4c4;"></div>
<div style="left:157px;top:630px;width:84px;height:17px;background:#c4c4c4;"></div>
<div style="left:157px;top:648px;width:84px;height:17px;background:#c4c4c4;"></div>
<div style="left:157px;top:666px;width:84px;height:17px;background:#c4c4c4;"></div>
<div style="left:157px;top:684px;width:84px;height:17px;background:#c4c4c4;"></div>
<div style="left:157px;top:702px;width:84px;height:17px;background:#c4c4c4;"></div>
<div style="left:157px;top:720px;width:84px;height:10px;background:#c4c4c4;"></div>
<span class="t " style="left:163px;top:379.69px;font-size:11px;line-height:15px;color:#000;">d (Std.)</span>
<span class="t " style="left:163px;top:397.69px;font-size:11px;line-height:15px;color:#000;">f</span>
<span class="t " style="left:163px;top:415.69px;font-size:11px;line-height:15px;color:#000;">i</span>
<div style="left:241px;top:354px;width:3px;height:376px;background:#f2f2f2;"></div>
<div style="left:244px;top:354px;width:760px;height:376px;background:#cccccc;"></div>
<span class="t " style="left:248.5px;top:353.69px;font-size:11px;line-height:15px;color:#000;">Sprachcode:</span>
<span class="t " style="left:315px;top:353.69px;font-size:11px;line-height:15px;color:#000;font-weight:bold;">d</span>
<svg style="left:357px;top:357px" width="11" height="11" viewBox="0 0 11 11"><rect x="0" y="0" width="11" height="11" fill="#f9f9f9"/><path d="M1.800 5.600l2.400 2.600L9.300 2.400" stroke="#a3a3a3" stroke-width="1.300" fill="none"/></svg>
<span class="t " style="left:372px;top:354.69px;font-size:11px;line-height:15px;color:#838383;letter-spacing:-0.094px;">Standard</span>
<span class="t " style="left:248.2px;top:384.69px;font-size:11px;line-height:15px;color:#000;font-weight:bold;letter-spacing:0.043px;">&lt;fieldref name=&quot;SALUTATION&quot;/&gt;</span>
<span class="t " style="left:248.2px;top:398.69px;font-size:11px;line-height:15px;color:#000;font-weight:bold;letter-spacing:0.332px;">ed ut perspiciatis unde omnis iste natus error sit voluptatem accusantium doloremque laudantium, totam rem aperiam, eaque ipsa</span>
<span class="t " style="left:248.2px;top:412.69px;font-size:11px;line-height:15px;color:#000;font-weight:bold;letter-spacing:0.216px;">quae ab illo inventore veritatis et quasi architecto beatae vitae dicta sunt explicabo.</span>
<span class="t " style="left:248.2px;top:440.69px;font-size:11px;line-height:15px;color:#000;font-weight:bold;letter-spacing:0.28px;">Nemo enim ipsam voluptatem quia voluptas sit aspernatur aut odit aut fugit, sed quia consequuntur magni dolores eos qui ratione</span>
<span class="t " style="left:248.2px;top:454.69px;font-size:11px;line-height:15px;color:#000;font-weight:bold;letter-spacing:0.283px;">voluptatem sequi nesciunt. Neque porro quisquam est, qui dolorem ipsum quia dolor sit amet, consectetur, adipisci velit, sed quia non</span>
<span class="t " style="left:248.2px;top:468.69px;font-size:11px;line-height:15px;color:#000;font-weight:bold;letter-spacing:0.288px;">numquam eius modi tempora incidunt ut labore et dolore magnam aliquam quaerat voluptatem. Ut enim ad minima veniam, quis</span>
<span class="t " style="left:248.2px;top:482.69px;font-size:11px;line-height:15px;color:#000;font-weight:bold;letter-spacing:0.378px;">nostrum exercitati</span>
<span class="t " style="left:248.2px;top:510.69px;font-size:11px;line-height:15px;color:#000;font-weight:bold;letter-spacing:0.013px;">Betrag:  &lt;fieldref name=&quot;BETRAG&quot; /&gt;</span>
<span class="t " style="left:248.2px;top:552.69px;font-size:11px;line-height:15px;color:#000;font-weight:bold;letter-spacing:0.294px;">Et harum quidem rerum facilis est et expedita distinctio. Nam libero tempore, cum soluta nobis est eligendi optio cumque nihil impedit</span>
<span class="t " style="left:248.2px;top:566.69px;font-size:11px;line-height:15px;color:#000;font-weight:bold;letter-spacing:0.345px;">quo minus id quod maxime placeat facere possimus, omnis voluptas assumenda est, omnis dolor repellendus.</span>
<span class="t " style="left:2.4px;top:735.84px;font-size:12px;line-height:16px;color:#000;letter-spacing:-0.314px;">Erfasst: 06.02.17 / dur Geändert: 06.02.17 /</span>
<span class="t " style="left:917px;top:738.69px;font-size:11px;line-height:15px;color:#000;letter-spacing:-0.205px;">Normal / pav</span>
<div style="left:910px;top:739px;width:2px;height:2px;background:#b4b1a2;"></div>
<div style="left:910px;top:739px;width:1px;height:1px;background:#858270;"></div>
<div style="left:910px;top:743px;width:2px;height:2px;background:#b4b1a2;"></div>
<div style="left:910px;top:743px;width:1px;height:1px;background:#858270;"></div>
<div style="left:910px;top:747px;width:2px;height:2px;background:#b4b1a2;"></div>
<div style="left:910px;top:747px;width:1px;height:1px;background:#858270;"></div>
<div style="left:910px;top:751px;width:2px;height:2px;background:#b4b1a2;"></div>
<div style="left:910px;top:751px;width:1px;height:1px;background:#858270;"></div>
<div style="left:981px;top:739px;width:2px;height:2px;background:#b4b1a2;"></div>
<div style="left:981px;top:739px;width:1px;height:1px;background:#858270;"></div>
<div style="left:981px;top:743px;width:2px;height:2px;background:#b4b1a2;"></div>
<div style="left:981px;top:743px;width:1px;height:1px;background:#858270;"></div>
<div style="left:981px;top:747px;width:2px;height:2px;background:#b4b1a2;"></div>
<div style="left:981px;top:747px;width:1px;height:1px;background:#858270;"></div>
<div style="left:981px;top:751px;width:2px;height:2px;background:#b4b1a2;"></div>
<div style="left:981px;top:751px;width:1px;height:1px;background:#858270;"></div>
<svg style="left:989px;top:739px" width="14" height="14" viewBox="0 0 14 14"><g fill="#4169e1"><circle cx="7" cy="7" r="5.300"/><rect x="5" y="0.200" width="4" height="13.600" rx="1.200"/><rect x="5" y="0.200" width="4" height="13.600" rx="1.200" transform="rotate(60 7 7)"/><rect x="5" y="0.200" width="4" height="13.600" rx="1.200" transform="rotate(120 7 7)"/></g><circle cx="7" cy="7" r="2" fill="#f0f0f0"/></svg>
</div></body></html>
